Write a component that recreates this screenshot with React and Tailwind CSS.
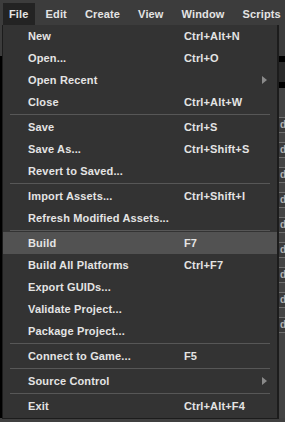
const menuBar = ['File', 'Edit', 'Create', 'View', 'Window', 'Scripts'];

const items = [
  { label: 'New', shortcut: 'Ctrl+Alt+N' },
  { label: 'Open...', shortcut: 'Ctrl+O' },
  { label: 'Open Recent', submenu: true },
  { label: 'Close', shortcut: 'Ctrl+Alt+W' },
  { sep: true },
  { label: 'Save', shortcut: 'Ctrl+S' },
  { label: 'Save As...', shortcut: 'Ctrl+Shift+S' },
  { label: 'Revert to Saved...' },
  { sep: true },
  { label: 'Import Assets...', shortcut: 'Ctrl+Shift+I' },
  { label: 'Refresh Modified Assets...' },
  { sep: true },
  { label: 'Build', shortcut: 'F7', active: true },
  { label: 'Build All Platforms', shortcut: 'Ctrl+F7' },
  { label: 'Export GUIDs...' },
  { label: 'Validate Project...' },
  { label: 'Package Project...' },
  { sep: true },
  { label: 'Connect to Game...', shortcut: 'F5' },
  { sep: true },
  { label: 'Source Control', submenu: true },
  { sep: true },
  { label: 'Exit', shortcut: 'Ctrl+Alt+F4' },
];

function Arrow() {
  return (
    <svg width="5" height="8" viewBox="0 0 5 8" className="ml-auto mr-[10px]">
      <path d="M0 0 L5 4 L0 8 Z" fill="#8a8a8a" />
    </svg>
  );
}

function MenuRow({ item }) {
  if (item.sep) {
    return (
      <div className="h-[3px] flex items-center px-[7px]">
        <div className="h-px w-full bg-[#575757]" />
      </div>
    );
  }
  return (
    <div className={`h-[22px] flex items-center pl-[25px] ${item.active ? 'bg-[#525252]' : ''}`}>
      <span className="w-[156px] shrink-0">{item.label}</span>
      {item.shortcut && <span>{item.shortcut}</span>}
      {item.submenu && <Arrow />}
    </div>
  );
}

// bits of the editor panel that peek out right of the menu
function SidePanel() {
  const fields = Array.from({ length: 9 });
  return (
    <div className="w-[6px] flex flex-col overflow-hidden">
      <div className="h-[31px] bg-[#3c3c3c]" />
      <div className="h-[6px] bg-black" />
      <div className="h-[20px] bg-[#2a2a2a]" />
      <div className="h-[6px] bg-black" />
      <div className="flex-1 bg-[#434343] pt-[29px] flex flex-col gap-[9px]">
        {fields.map((_, i) => (
          <div key={i} className="h-[16px] border-y border-[#6e6e6e] bg-[#3a3a3a] text-[#b0b0b0] text-[10px] leading-[14px] pl-px tracking-normal">
            d
          </div>
        ))}
      </div>
    </div>
  );
}

export default function App() {
  return (
    <div
      className="relative w-[285px] h-[422px] overflow-hidden bg-[#3c3c3c] text-[11px] font-bold tracking-[0.15px] text-[#e4e4e4] flex flex-col"
      style={{ fontFamily: '"Liberation Sans", Arial, sans-serif' }}
    >
      <div className="h-[25px] shrink-0 flex items-end pl-[3px] bg-[#3c3c3c]">
        {menuBar.map((m, i) => (
          <div
            key={m}
            className={`h-[22px] flex items-center shrink-0 ${i === 0 ? 'bg-[#232323] px-[6px] mr-[5px]' : 'px-[6px] mr-[6px]'}`}
          >
            {m}
          </div>
        ))}
      </div>

      <div className="flex-1 flex">
        <div className="w-[2px] flex flex-col">
          <div className="h-[31px] bg-[#3c3c3c]" />
          <div className="flex-1 bg-black" />
        </div>
        <div className="flex-1 bg-[#2e2e2e]" />
        <SidePanel />
      </div>
      <div className="h-[4px] shrink-0 bg-[#404040]" />

      <div className="absolute left-[2px] top-[25px] w-[277px] bg-[#333333] border-r-2 border-b border-l border-[#1c1c1c] pb-px">
        {items.map((item, i) => (
          <MenuRow key={i} item={item} />
        ))}
      </div>
    </div>
  );
}
